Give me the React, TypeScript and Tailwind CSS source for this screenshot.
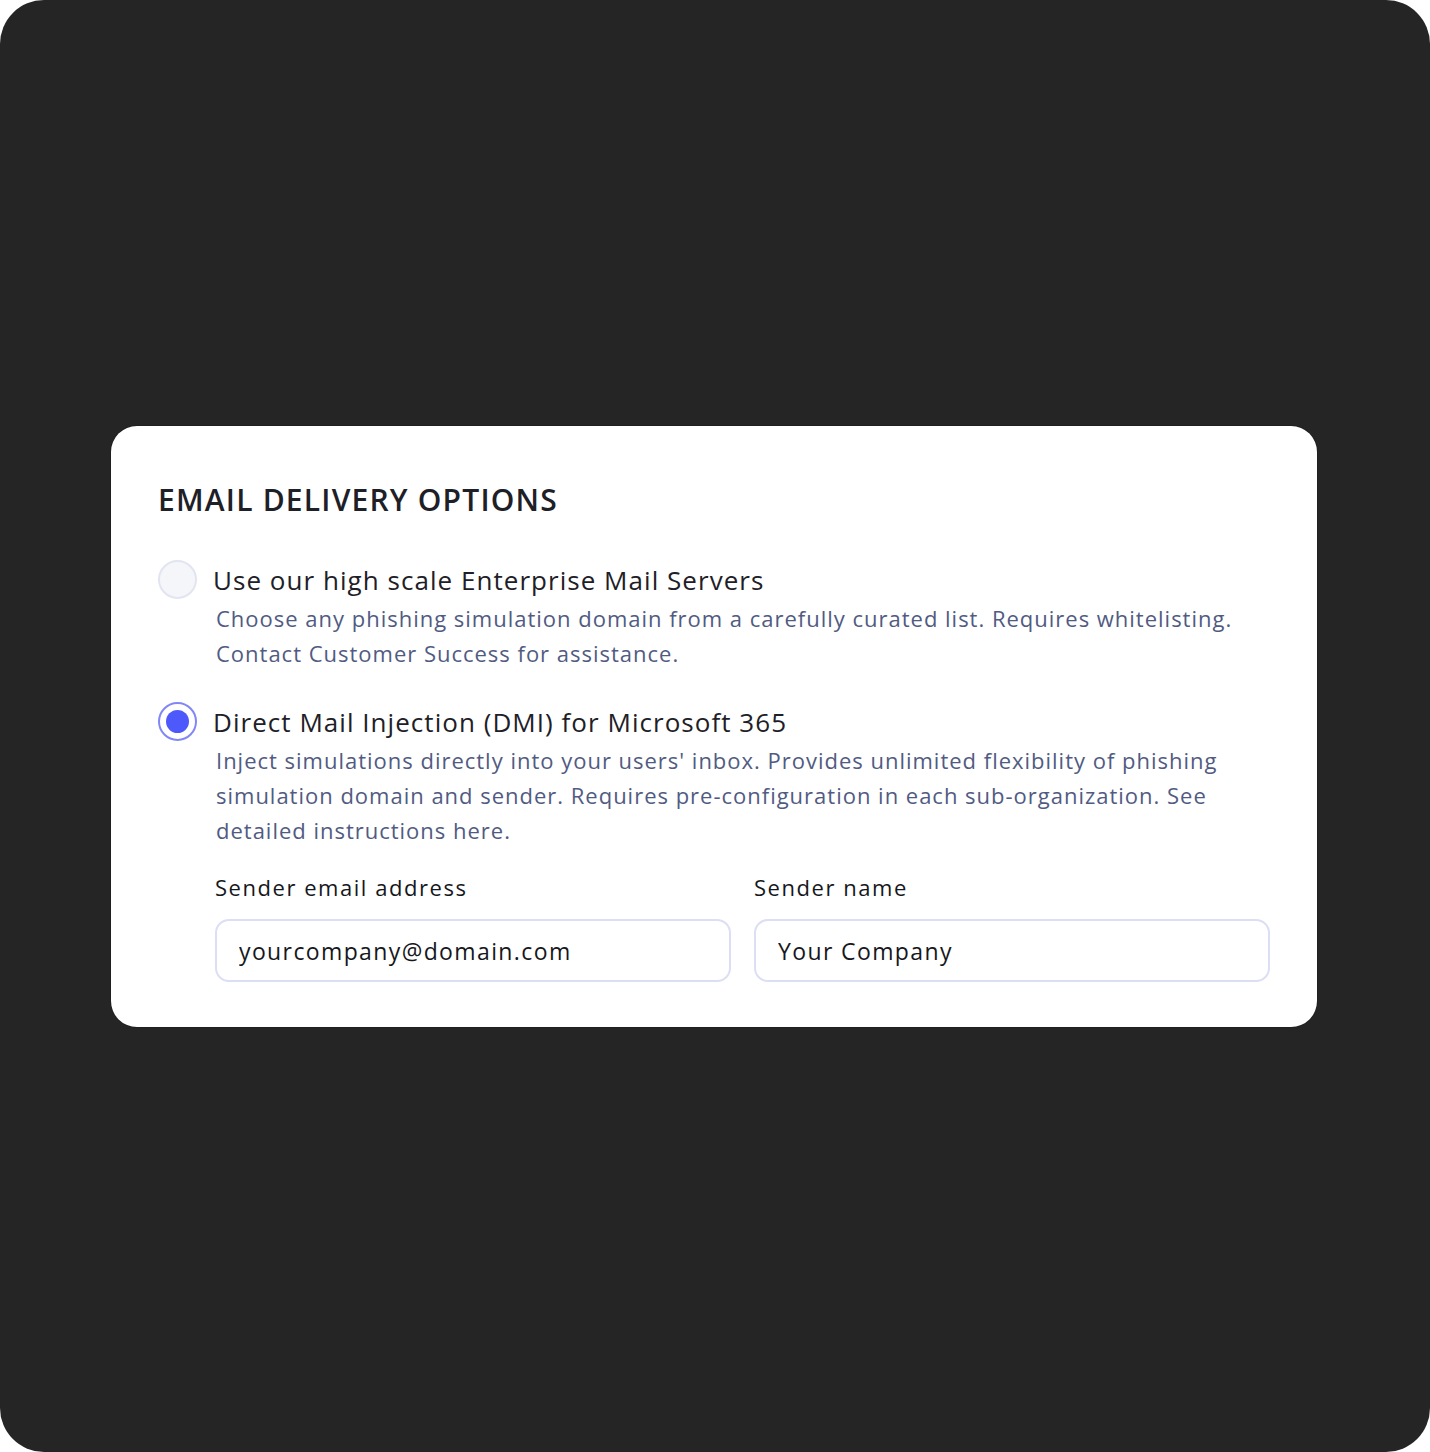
import { useState } from "react";

type Option = {
  id: string;
  title: string;
  description: string;
};

const options: Option[] = [
  {
    id: "enterprise",
    title: "Use our high scale Enterprise Mail Servers",
    description:
      "Choose any phishing simulation domain from a carefully curated list. Requires whitelisting. Contact Customer Success for assistance.",
  },
  {
    id: "dmi",
    title: "Direct Mail Injection (DMI) for Microsoft 365",
    description:
      "Inject simulations directly into your users' inbox. Provides unlimited flexibility of phishing simulation domain and sender. Requires pre-configuration in each sub-organization. See detailed instructions here.",
  },
];

function Radio({ checked }: { checked: boolean }) {
  if (checked) {
    return (
      <span className="flex h-[39px] w-[39px] shrink-0 items-center justify-center rounded-full border-2 border-[#8287f7] bg-white">
        <span className="h-[23px] w-[23px] rounded-full bg-[#4d59fb]" />
      </span>
    );
  }
  return <span className="h-[39px] w-[39px] shrink-0 rounded-full border-2 border-[#e2e5f1] bg-[#f5f6f9]" />;
}

function Field({ label, value }: { label: string; value: string }) {
  return (
    <label className="flex flex-col gap-[17px]">
      <span className="text-[22px] leading-[30px] tracking-[0.07em] text-[#16171c]">{label}</span>
      <input
        defaultValue={value}
        className="h-[63px] w-full rounded-[14px] border-2 border-[#dcdff4] bg-white px-[22px] text-[23px] tracking-[0.06em] text-[#16171c] outline-none"
      />
    </label>
  );
}

export default function App() {
  const [selected, setSelected] = useState("dmi");

  return (
    <div className="h-[1452px] w-[1430px] bg-white" style={{ fontFamily: "'Open Sans', 'Noto Sans', sans-serif" }}>
      <div className="h-full w-full rounded-[44px] bg-[#252525] pl-[111px] pt-[426px]">
        <div className="w-[1206px] rounded-[26px] bg-white px-[47px] pb-[45px] pt-[52px] shadow-[0_0_0_1px_rgba(0,0,0,0.15)]">
          <h2 className="text-[30px] font-semibold leading-[44px] tracking-[0.04em] text-[#1e2027]">
            EMAIL DELIVERY OPTIONS
          </h2>

          <div className="mt-[38px] flex flex-col gap-[31px]">
            {options.map((opt) => (
              <div key={opt.id}>
                <button
                  type="button"
                  onClick={() => setSelected(opt.id)}
                  className="flex items-center gap-[16px] text-left"
                >
                  <Radio checked={selected === opt.id} />
                  <span className="text-[26px] leading-[38px] tracking-[0.04em] text-[#1e2027]">{opt.title}</span>
                </button>
                <p className="mt-[2px] pl-[58px] text-[22px] leading-[35px] tracking-[0.045em] text-[#515b82]">
                  {opt.description}
                </p>
              </div>
            ))}
          </div>

          <div className="mt-[24px] grid grid-cols-2 gap-[23px] pl-[57px]">
            <Field label="Sender email address" value="yourcompany@domain.com" />
            <Field label="Sender name" value="Your Company" />
          </div>
        </div>
      </div>
    </div>
  );
}
